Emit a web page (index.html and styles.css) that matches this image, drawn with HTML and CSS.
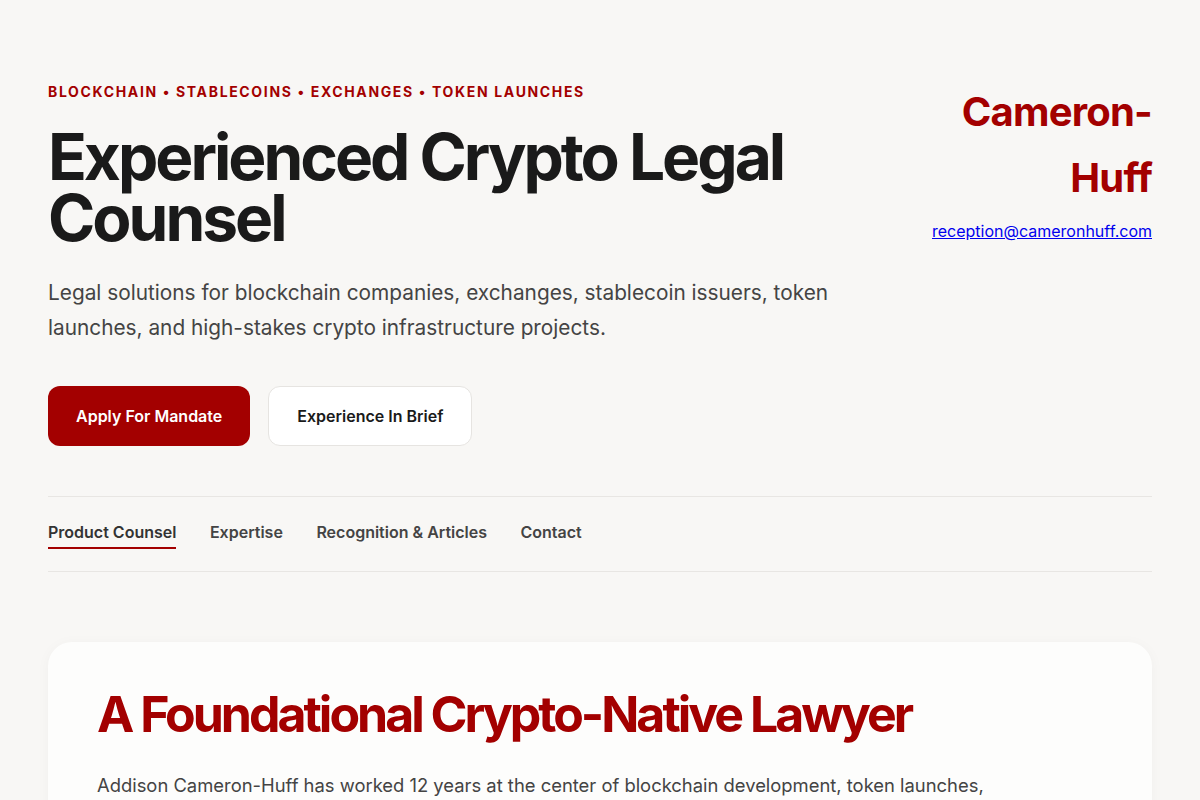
FILE: index.html
```html
<!DOCTYPE html>
<html lang="en">
<head>
    <meta charset="UTF-8">
    <meta name="viewport" content="width=device-width, initial-scale=1.0">
    <title>Cameron-Huff | Crypto Legal Counsel</title>
    <link rel="stylesheet" href="styles.css">
</head>
<body>
    <div class="page">
        <header class="hero">
            <div class="hero-main">
                <p class="eyebrow">Blockchain &bull; Stablecoins &bull; Exchanges &bull; Token Launches</p>
                <h1>Experienced Crypto Legal Counsel</h1>
                <p class="lead">Legal solutions for blockchain companies, exchanges, stablecoin issuers, token launches, and high-stakes crypto infrastructure projects.</p>
                <div class="actions">
                    <a class="btn btn-primary" href="#apply">Apply For Mandate</a>
                    <a class="btn btn-secondary" href="#experience">Experience In Brief</a>
                </div>
            </div>
            <div class="brand">
                <div class="brand-name">Cameron-Huff</div>
                <a class="brand-mail" href="mailto:reception@cameronhuff.com">reception@cameronhuff.com</a>
            </div>
        </header>

        <nav class="tabs">
            <a class="tab active" href="#counsel">Product Counsel</a>
            <a class="tab" href="#expertise">Expertise</a>
            <a class="tab" href="#recognition">Recognition &amp; Articles</a>
            <a class="tab" href="#contact">Contact</a>
        </nav>

        <section class="card" id="counsel">
            <h2>A Foundational Crypto-Native Lawyer</h2>
            <p>Addison Cameron-Huff has worked 12 years at the center of blockchain development, token launches, exchanges and stablecoin issuance, advising founders from the earliest design work through launch and beyond.</p>
        </section>
    </div>
</body>
</html>
```

FILE: styles.css
```css
body {
    margin: 0;
    background: #f8f7f5;
    color: #1a1a1a;
    font-family: Inter, "Noto Sans", Arial, sans-serif;
}
.page {
    max-width: 1104px;
    margin: 0 auto;
    padding: 81px 48px 40px;
}
.hero {
    display: flex;
    justify-content: space-between;
    align-items: flex-start;
    gap: 40px;
}
.hero-main {
    flex: 1;
}
.eyebrow {
    margin: 0 0 23px;
    color: #a30000;
    font-size: 14px;
    font-weight: 700;
    letter-spacing: 0.118em;
    text-transform: uppercase;
    line-height: 22px;
}
.hero h1 {
    margin: 0;
    max-width: 780px;
    font-size: 64px;
    font-weight: 700;
    letter-spacing: -0.047em;
    line-height: 61px;
    color: #1a1a1a;
}
.lead {
    margin: 27px 0 0;
    max-width: 820px;
    font-size: 20.8px;
    line-height: 35px;
    color: #444;
}
.actions {
    display: flex;
    gap: 18px;
    margin-top: 41px;
}
.btn {
    display: inline-flex;
    align-items: center;
    justify-content: center;
    height: 60px;
    padding: 0 28px;
    border-radius: 12px;
    font-size: 16px;
    font-weight: 600;
    text-decoration: none;
    box-sizing: border-box;
}
.btn-primary {
    background: #a30000;
    color: #fff;
}
.btn-secondary {
    background: #fff;
    color: #1a1a1a;
    border: 1px solid #e6e4e1;
}
.brand {
    text-align: right;
    margin-top: -2px;
}
.brand-name {
    width: 200px;
    margin-left: auto;
    color: #a30000;
    font-size: 40px;
    font-weight: 700;
    letter-spacing: -0.02em;
    line-height: 66px;
}
.brand-mail {
    display: inline-block;
    margin-top: 10px;
    color: #0000ee;
    font-size: 16px;
}
.tabs {
    display: flex;
    gap: 33.5px;
    margin-top: 50px;
    padding: 25px 0 22px;
    border-top: 1px solid #e8e6e3;
    border-bottom: 1px solid #e8e6e3;
}
.tab {
    padding-bottom: 5px;
    border-bottom: 2px solid transparent;
    color: #444;
    font-size: 16px;
    font-weight: 600;
    text-decoration: none;
}
.tab.active {
    color: #333;
    border-bottom-color: #a30000;
}
.card {
    margin-top: 70px;
    padding: 42px 49px;
    background: #fdfdfc;
    border-radius: 24px;
    box-shadow: 0 2px 14px rgba(0, 0, 0, 0.035);
}
.card h2 {
    margin: 0;
    color: #a30000;
    font-size: 50px;
    font-weight: 700;
    letter-spacing: -0.06em;
    line-height: 1.2;
}
.card p {
    margin: 26px 0 0;
    max-width: 920px;
    font-size: 18.4px;
    line-height: 1.7;
    color: #444;
}
```
